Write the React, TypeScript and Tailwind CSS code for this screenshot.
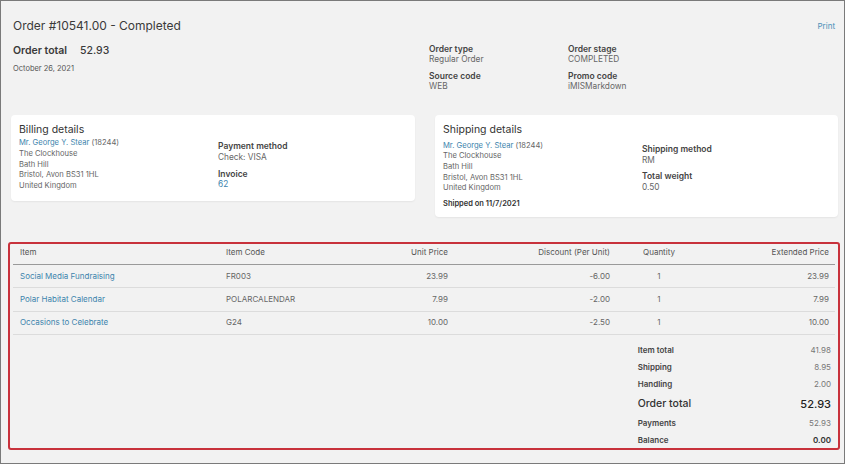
import React from "react";

const font = { fontFamily: "Inter, 'Noto Sans', sans-serif" };

function Pair({ label, value, link }: { label: string; value: string; link?: boolean }) {
  return (
    <div className="flex flex-col">
      <div className="text-[8.5px] leading-[10.5px] font-semibold text-[#444]">{label}</div>
      <div className={`text-[8.3px] leading-[10.5px] ${link ? "text-[#3d84ad]" : "text-[#666]"}`}>{value}</div>
    </div>
  );
}

function Address() {
  return (
    <>
      <div>
        <span className="text-[#3d84ad]">Mr. George Y. Stear</span> (18244)
      </div>
      <div>The Clockhouse</div>
      <div>Bath Hill</div>
      <div>Bristol, Avon BS31 1HL</div>
      <div>United Kingdom</div>
    </>
  );
}

const rows = [
  { item: "Social Media Fundraising", code: "FR003", price: "23.99", disc: "-6.00", qty: "1", ext: "23.99" },
  { item: "Polar Habitat Calendar", code: "POLARCALENDAR", price: "7.99", disc: "-2.00", qty: "1", ext: "7.99" },
  { item: "Occasions to Celebrate", code: "G24", price: "10.00", disc: "-2.50", qty: "1", ext: "10.00" },
];

const cols = "grid grid-cols-[206px_121px_115px_162px_84px_134px]";

export default function App() {
  return (
    <div style={font} className="w-[845px] h-[464px] box-border border border-[#7a7a7a] bg-[#f2f2f2] overflow-hidden">
      {/* Header */}
      <div className="h-[114px] pt-[16px] pl-[12px] pr-[9px] flex">
        <div className="w-[416px] flex flex-col">
          <div className="text-[12px] leading-[18px] text-[#3a3a3a]">Order #10541.00 - Completed</div>
          <div className="mt-[9px] flex items-baseline text-[10.5px] leading-[14px] text-[#3a3a3a]">
            <span className="font-semibold w-[67px]">Order total</span>
            <span className="font-medium">52.93</span>
          </div>
          <div className="mt-[4.5px] text-[7.5px] leading-[11px] text-[#555]">October 26, 2021</div>
        </div>
        <div className="mt-[26.5px] w-[278px] grid grid-cols-[139px_139px] gap-y-[6px] self-start">
          <Pair label="Order type" value="Regular Order" />
          <Pair label="Order stage" value="COMPLETED" />
          <Pair label="Source code" value="WEB" />
          <Pair label="Promo code" value="iMISMarkdown" />
        </div>
        <div className="flex-1 flex justify-end">
          <div className="mt-[4px] text-[8px] leading-[11px] text-[#4a8fb8] h-[11px]">Print</div>
        </div>
      </div>

      {/* Cards */}
      <div className="pl-[10px] flex items-start gap-[20px]">
        <div className="w-[404px] bg-white rounded-[4px] shadow-[0_1px_2px_rgba(0,0,0,0.06)] pt-[8px] pb-[9px] px-[8px] flex">
          <div className="w-[199px] flex flex-col">
            <div className="text-[10.5px] leading-[14px] text-[#333]">Billing details</div>
            <div className="mt-[1px] text-[7.6px] leading-[10.8px] text-[#666]">
              <Address />
            </div>
          </div>
          <div className="pt-[18.3px] flex flex-col gap-[6.3px]">
            <Pair label="Payment method" value="Check: VISA" />
            <Pair label="Invoice" value="62" link />
          </div>
        </div>
        <div className="w-[403px] bg-white rounded-[4px] shadow-[0_1px_2px_rgba(0,0,0,0.06)] pt-[8px] pb-[7.5px] px-[8px] flex">
          <div className="w-[199px] flex flex-col">
            <div className="text-[10.5px] leading-[14px] text-[#333]">Shipping details</div>
            <div className="mt-[3.6px] text-[7.6px] leading-[10.7px] text-[#666]">
              <Address />
            </div>
            <div className="mt-[4.7px] text-[7.5px] leading-[10.7px] font-semibold text-[#333]">Shipped on 11/7/2021</div>
          </div>
          <div className="pt-[21px] flex flex-col gap-[6px]">
            <Pair label="Shipping method" value="RM" />
            <Pair label="Total weight" value="0.50" />
          </div>
        </div>
      </div>

      {/* Items table */}
      <div className="ml-[7px] mt-[25px] w-[832px] border-2 border-[#c8323c] rounded-[3px] px-[3px]">
        <div className={`${cols} pt-[3px] pb-[6px] border-b border-[#9a9a9a] text-[8px] leading-[11px] text-[#555]`}>
          <div className="pl-[7px]">Item</div>
          <div className="pl-[7px]">Item Code</div>
          <div className="pr-[7px] text-right">Unit Price</div>
          <div className="pr-[7px] text-right">Discount (Per Unit)</div>
          <div className="text-center">Quantity</div>
          <div className="pr-[6px] text-right">Extended Price</div>
        </div>
        {rows.map((r) => (
          <div key={r.code} className={`${cols} h-[23.3px] items-center border-b border-[#dcdcdc] text-[8px] leading-[11px] text-[#666]`}>
            <div className="pl-[7px] text-[#3d84ad]">{r.item}</div>
            <div className="pl-[7px]">{r.code}</div>
            <div className="pr-[7px] text-right">{r.price}</div>
            <div className="pr-[7px] text-right">{r.disc}</div>
            <div className="text-center">{r.qty}</div>
            <div className="pr-[6px] text-right">{r.ext}</div>
          </div>
        ))}
        <div className="ml-[624.7px] w-[193.3px] pt-[7.2px] flex flex-col">
          <div className="flex justify-between text-[8px] leading-[17px]">
            <span className="font-semibold text-[#444]">Item total</span>
            <span className="text-[#777]">41.98</span>
          </div>
          <div className="flex justify-between text-[8px] leading-[17px]">
            <span className="font-semibold text-[#444]">Shipping</span>
            <span className="text-[#777]">8.95</span>
          </div>
          <div className="flex justify-between text-[8px] leading-[17px]">
            <span className="font-semibold text-[#444]">Handling</span>
            <span className="text-[#777]">2.00</span>
          </div>
          <div className="flex justify-between leading-[22px]">
            <span className="text-[10.5px] font-medium text-[#333]">Order total</span>
            <span className="text-[11px] font-medium text-[#222]">52.93</span>
          </div>
          <div className="flex justify-between text-[8px] leading-[17px]">
            <span className="font-semibold text-[#444]">Payments</span>
            <span className="text-[#777]">52.93</span>
          </div>
          <div className="mt-[1px] flex justify-between text-[8px] leading-[15px]">
            <span className="font-semibold text-[#444]">Balance</span>
            <span className="font-semibold text-[#333]">0.00</span>
          </div>
        </div>
      </div>
    </div>
  );
}
